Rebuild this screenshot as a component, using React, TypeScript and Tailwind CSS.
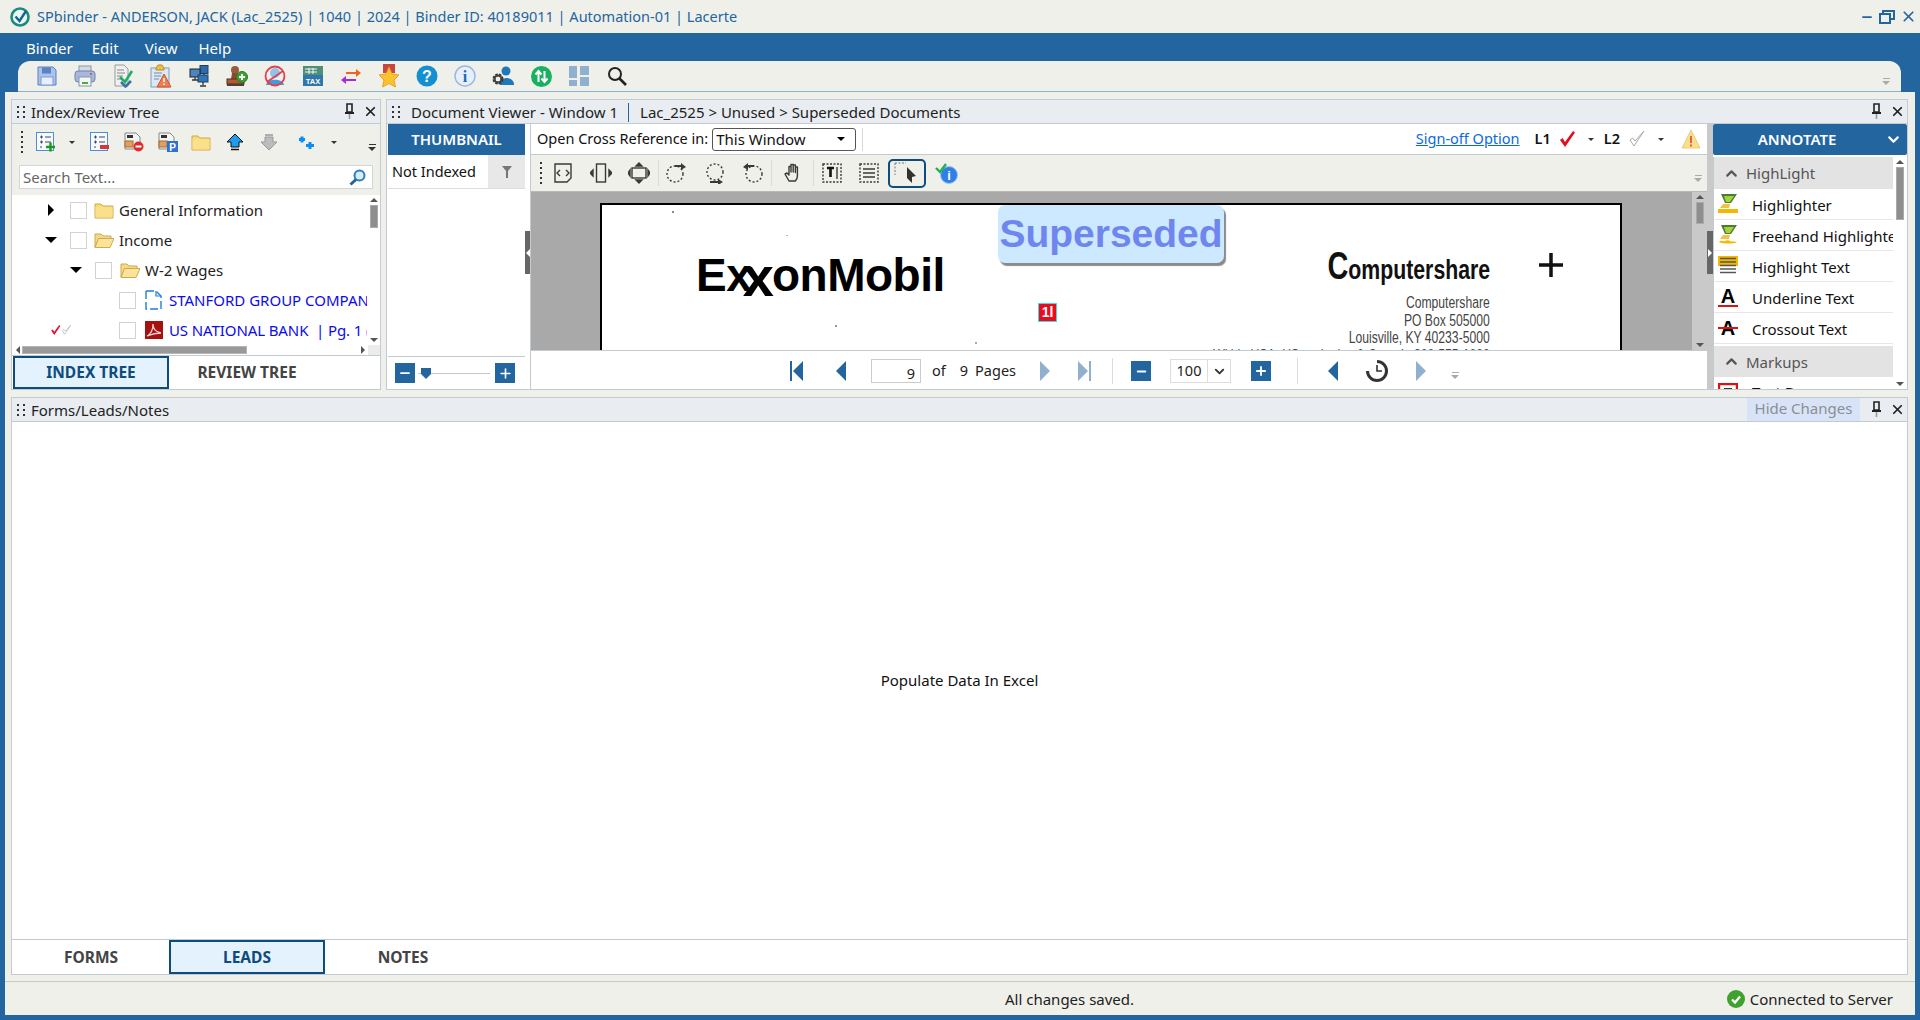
import { ReactNode } from "react";
import { ChevronDown, ChevronUp, Minus, Plus, X } from "lucide-react";

const BLUE = "#23659f";

function Caret({ dir = "down", size = 4, color = "#000" }: { dir?: "down" | "right" | "left" | "up"; size?: number; color?: string }) {
  const s = size * 2;
  const pts = { down: `0,0 ${s},0 ${size},${size}`, up: `0,${size} ${s},${size} ${size},0`, right: `0,0 ${size},${size} 0,${s}`, left: `${size},0 0,${size} ${size},${s}` }[dir];
  const w = dir === "down" || dir === "up" ? s : size;
  const h = dir === "down" || dir === "up" ? size : s;
  return (
    <svg width={w} height={h} viewBox={`0 0 ${w} ${h}`} className="shrink-0">
      <polygon points={pts} fill={color} />
    </svg>
  );
}

function Grip({ rows = 2 }: { rows?: number }) {
  return (
    <div className="grid grid-cols-2 gap-[3px] w-[9px] shrink-0">
      {Array.from({ length: rows * 2 }).map((_, i) => (
        <span key={i} className="w-[2px] h-[2px] bg-[#333]" />
      ))}
    </div>
  );
}

function VDots() {
  return (
    <div className="flex flex-col gap-[3px] shrink-0">
      {[0, 1, 2, 3, 4].map((i) => (
        <span key={i} className="w-[2px] h-[2px] bg-[#333]" />
      ))}
    </div>
  );
}

function Overflow({ color = "#333" }: { color?: string }) {
  return (
    <div className="flex flex-col items-center gap-[2px] shrink-0">
      <span className="w-[7px] h-px" style={{ background: color }} />
      <Caret size={4} color={color} />
    </div>
  );
}

function PinIcon() {
  return (
    <svg width="11" height="17" viewBox="0 0 11 17" className="shrink-0">
      <path d="M3 1h5v8H3z" fill="#e9edf2" stroke="#222" strokeWidth="1.6" />
      <path d="M1 10h9" stroke="#222" strokeWidth="2" />
      <path d="M5.5 11v5" stroke="#999" strokeWidth="1.6" />
    </svg>
  );
}

function PanelHeader({ title, children }: { title: ReactNode; children?: ReactNode }) {
  return (
    <div className="h-[24px] shrink-0 flex items-center bg-[#e9edf2] border-b border-[#c2cbd2] pl-[5px] text-[15px] text-[#222]">
      <Grip rows={3} />
      <div className="flex items-center pt-[1px]">{title}</div>
      <div className="ml-auto flex items-center h-full">
        {children}
        <div className="ml-[11px]"><PinIcon /></div>
        <X size={15} color="#222" strokeWidth={2.8} className="ml-[8px] mr-[2px]" />
      </div>
    </div>
  );
}

function TabButton({ label, active, w }: { label: string; active?: boolean; w: string }) {
  return (
    <div
      className={`${w} h-full flex items-center justify-center pt-[1px] text-[15.5px] font-bold ${
        active ? "bg-[#e3f2fd] border-2 border-[#0d4c7d] text-[#0d4c7d]" : "text-[#444]"
      }`}
    >
      {label}
    </div>
  );
}

/* ---------- main toolbar icons ---------- */
const ico = "shrink-0";

function TB({ children }: { children: ReactNode }) {
  return <div className="w-[22px] h-[24px] shrink-0 flex items-center justify-center">{children}</div>;
}
function SaveIcon() {
  return (
    <svg width="22" height="22" viewBox="0 0 22 22" className={ico}>
      <path d="M2 2h15l3 3v15H2z" fill="#a9c3ea" stroke="#5b7fc0" />
      <rect x="6" y="2.5" width="9" height="6" fill="#5d82c4" />
      <rect x="5" y="12" width="12" height="8" fill="#e8eefb" stroke="#7d9bd0" />
    </svg>
  );
}
function PrintIcon() {
  return (
    <svg width="22" height="22" viewBox="0 0 22 22" className={ico}>
      <rect x="5" y="1" width="12" height="6" fill="#d6dae2" stroke="#8d96a8" />
      <rect x="1" y="6" width="20" height="11" rx="3" fill="#a8b8dc" stroke="#6d81b5" />
      <rect x="5" y="12" width="12" height="9" fill="#f4f6f4" stroke="#8d96a8" />
      <rect x="8" y="17" width="6" height="2" fill="#4fa64f" />
      <circle cx="17" cy="9" r="1" fill="#d94040" />
    </svg>
  );
}
function DocCheckIcon() {
  return (
    <svg width="22" height="24" viewBox="0 0 22 24" className={ico}>
      <path d="M3 1h9l4 4v17H3z" fill="#f0f0f0" stroke="#9a9a9a" />
      <path d="M5 6h7M5 9h8M5 12h6M5 15h5" stroke="#888" />
      <path d="M9 18l5 5M19 17l-6 6" stroke="#3d6fa5" strokeWidth="2.5" />
      <path d="M8 13l5 5 7-11" fill="none" stroke="#1fae6a" strokeWidth="2.6" />
    </svg>
  );
}
function ClipWarnIcon() {
  return (
    <svg width="22" height="24" viewBox="0 0 22 24" className={ico}>
      <rect x="1" y="4" width="18" height="19" fill="#dce8f4" stroke="#7d9bc0" />
      <path d="M6 4l2-3h4l2 3v2H6z" fill="#ecc04f" stroke="#b98e25" />
      <path d="M4 9h8M4 12h7M4 15h5" stroke="#7a8ca0" />
      <path d="M14 10l7 13H7z" fill="#ef7d4f" stroke="#cc5530" />
      <path d="M14 14v4M14 19.5v1.5" stroke="#fff" strokeWidth="1.5" />
    </svg>
  );
}
function NetworkIcon() {
  return (
    <svg width="20" height="22" viewBox="0 0 20 22" className={ico}>
      <rect x="11" y="0.5" width="8" height="8" fill="#2f6aa8" stroke="#1c3f66" />
      <rect x="1" y="4" width="10" height="8" fill="#4a86c0" stroke="#222" />
      <rect x="9" y="10" width="10" height="7" fill="#2e76b8" stroke="#1c3f66" />
      <path d="M15 9v1M6 12v3M3 15h6M14 17v3M11 21h6" stroke="#333" strokeWidth="1.3" />
    </svg>
  );
}
function StampIcon() {
  return (
    <svg width="22" height="22" viewBox="0 0 22 22" className={ico}>
      <circle cx="9" cy="5" r="4" fill="#9a5a42" />
      <path d="M6 8h6l1 6H5z" fill="#8a4a32" />
      <rect x="1" y="14" width="17" height="5" fill="#b25a30" stroke="#5b2f18" />
      <rect x="1" y="19" width="17" height="2" fill="#444" />
      <circle cx="16" cy="12" r="5.5" fill="#3e9e34" stroke="#2a7b25" />
      <path d="M13 12h6M16 9v6" stroke="#fff" strokeWidth="1.8" />
    </svg>
  );
}
function NoUserIcon() {
  return (
    <svg width="22" height="22" viewBox="0 0 22 22" className={ico}>
      <circle cx="11" cy="8" r="5" fill="#8fc3ea" />
      <path d="M2 20c1-7 17-7 18 0z" fill="#3e9be0" />
      <circle cx="11" cy="11" r="9.5" fill="none" stroke="#e3404a" strokeWidth="1.8" />
      <path d="M3 17L19 6" stroke="#e3404a" strokeWidth="1.8" />
    </svg>
  );
}
function TaxIcon() {
  return (
    <svg width="22" height="22" viewBox="0 0 22 22" className={ico}>
      <rect x="1" y="1" width="20" height="20" fill="#2f78ad" />
      <rect x="1" y="1" width="20" height="9" fill="#4d9078" />
      <path d="M3 4h12M3 7h12M7 3v6M11 3v6" stroke="#fff" strokeWidth="0.9" />
      <text x="11" y="19" textAnchor="middle" fontSize="7.5" fontWeight="700" fill="#fff" fontFamily="Liberation Sans, sans-serif">TAX</text>
    </svg>
  );
}
function SwapIcon() {
  return (
    <svg width="22" height="20" viewBox="0 0 22 20" className={ico}>
      <path d="M6 8V6h10V3l5 4-5 4V8z" fill="#f0641e" />
      <path d="M16 11v2H6v3l-5-4 5-4v3z" fill="#a72ae0" transform="translate(0 2)" />
    </svg>
  );
}
function MedalIcon() {
  return (
    <svg width="22" height="24" viewBox="0 0 22 24" className={ico}>
      <path d="M5 0h12v9H5z" fill="#c9453f" />
      <polygon points="11,3 14,10 21,11 16,16 17.5,23 11,19.5 4.5,23 6,16 1,11 8,10" fill="#f9c22e" stroke="#f0a020" />
    </svg>
  );
}
function HelpIcon() {
  return (
    <svg width="22" height="22" viewBox="0 0 22 22" className={ico}>
      <circle cx="11" cy="11" r="10.5" fill="#138fd2" />
      <text x="11" y="16.5" textAnchor="middle" fontSize="16" fontWeight="700" fill="#fff" fontFamily="Liberation Sans, sans-serif">?</text>
    </svg>
  );
}
function InfoIcon() {
  return (
    <svg width="22" height="22" viewBox="0 0 22 22" className={ico}>
      <circle cx="11" cy="11" r="10" fill="#e6f0fb" stroke="#9db8de" strokeWidth="1.5" />
      <text x="11" y="17" textAnchor="middle" fontSize="16" fontWeight="700" fill="#2467b5" fontFamily="Liberation Serif, serif">i</text>
    </svg>
  );
}
function UserGearIcon() {
  return (
    <svg width="22" height="22" viewBox="0 0 22 22" className={ico}>
      <circle cx="14" cy="6" r="4.5" fill="#1f78b8" />
      <path d="M8 20c0-9 13-9 14-1v1z" fill="#1f78b8" />
      <circle cx="6" cy="14" r="4" fill="none" stroke="#333" strokeWidth="3" strokeDasharray="2.2 1" />
      <circle cx="6" cy="14" r="3.5" fill="none" stroke="#444" strokeWidth="2" />
    </svg>
  );
}
function UpDownIcon() {
  return (
    <svg width="21" height="21" viewBox="0 0 21 21" className={ico}>
      <circle cx="10.5" cy="10.5" r="10.5" fill="#19b060" />
      <path d="M7.5 16V6M4.5 8.5l3-3.5 3 3.5M13.5 5v10M10.5 12.5l3 3.5 3-3.5" fill="none" stroke="#fff" strokeWidth="2" />
    </svg>
  );
}
function GridIcon() {
  return (
    <svg width="20" height="20" viewBox="0 0 20 20" className={ico}>
      <path d="M0 0h8v12H0zM0 14h8v6H0zM11 0h9v9h-9zM11 11h9v9h-9z" fill="#8fb1cf" />
    </svg>
  );
}
function SearchIcon() {
  return (
    <svg width="20" height="20" viewBox="0 0 20 20" className={ico}>
      <circle cx="8" cy="8" r="6" fill="none" stroke="#222" strokeWidth="2" />
      <path d="M12.5 12.5L19 19" stroke="#222" strokeWidth="2.6" />
    </svg>
  );
}

/* ---------- tree icons ---------- */
function ListPlusIcon({ minus }: { minus?: boolean }) {
  return (
    <svg width="20" height="20" viewBox="0 0 20 20" className={ico}>
      <rect x="0.5" y="0.5" width="17" height="18" fill="#f6f9fd" stroke="#4a90d9" />
      <path d="M4 5h3M5.5 3.5v3M4 10h3M5.5 8.5v3M4 15h2M9 5h6M9 10h6" stroke="#445" />
      {minus ? (
        <rect x="10" y="13" width="9" height="4" fill="#d33" />
      ) : (
        <path d="M10 15h9M14.5 10.5v9" stroke="#1a9a1a" strokeWidth="2.4" />
      )}
    </svg>
  );
}
function PageBadgeIcon({ kind }: { kind: "del" | "p" }) {
  return (
    <svg width="20" height="20" viewBox="0 0 20 20" className={ico}>
      <path d="M1 1h11l4 4v12H1z" fill="#f4f4f4" stroke="#888" />
      <path d="M3 3h6v3H3z" fill="#333" />
      <rect x="1" y="9" width="8" height="6" fill="#e0a060" stroke="#a86a30" />
      {kind === "del" ? (
        <>
          <circle cx="14.5" cy="14.5" r="5" fill="#dd2c2c" />
          <path d="M11.5 14.5h6" stroke="#fff" strokeWidth="2" />
        </>
      ) : (
        <>
          <rect x="9" y="9" width="11" height="11" fill="#2f6fd0" />
          <text x="14.5" y="18.5" textAnchor="middle" fontSize="10" fontWeight="700" fill="#fff" fontFamily="Liberation Sans, sans-serif">P</text>
        </>
      )}
    </svg>
  );
}
function ClosedFolder({ w = 20 }: { w?: number }) {
  return (
    <svg width={w} height="18" viewBox="0 0 20 18" className={ico}>
      <path d="M1 3h6l2 2h10v12H1z" fill="#f8d878" stroke="#cfa94c" />
      <rect x="1.5" y="6" width="17" height="10.5" fill="#fbe08c" />
    </svg>
  );
}
function OpenFolder() {
  return (
    <svg width="20" height="18" viewBox="0 0 20 18" className={ico}>
      <path d="M1 3h6l2 2h8v3H5L1 16z" fill="#f5d888" stroke="#cfa94c" />
      <path d="M4.5 7.5H20L16 16.5H1z" fill="#fbe49a" stroke="#cfa94c" />
    </svg>
  );
}
function UpArrow({ color, stem }: { color: string; stem: string }) {
  return (
    <svg width="18" height="18" viewBox="0 0 18 18" className={ico}>
      <path d="M9 1L1 9h4v5h8V9h4z" fill={color} stroke={stem} />
      <path d="M5 16.5h8" stroke={stem} strokeWidth="1.5" />
    </svg>
  );
}
function DownArrow() {
  return (
    <svg width="18" height="18" viewBox="0 0 18 18" className={ico}>
      <path d="M5 2h8" stroke="#999" strokeWidth="1.5" />
      <path d="M9 17l8-8h-4V4H5v5H1z" fill="#bcbcbc" stroke="#999" />
    </svg>
  );
}
function BlueDiamonds() {
  return (
    <svg width="17" height="13" viewBox="0 0 17 13" className={ico}>
      <path d="M1 3.5h6M4 .5v6M8 9.5h8M12 6v7" stroke="#0d8df0" strokeWidth="3" />
    </svg>
  );
}
function Checkbox() {
  return <span className="block w-[17px] h-[17px] shrink-0 bg-white border border-[#cdd3d8]" />;
}
function PdfIcon() {
  return (
    <svg width="18" height="18" viewBox="0 0 18 18" className={ico}>
      <rect width="18" height="18" fill="#a81010" />
      <path d="M2 15c4-2 6-6 6-12 0 5 3 8 8 9-5 0-9 1-14 3z" fill="none" stroke="#f0d0d0" strokeWidth="1.3" />
    </svg>
  );
}
function BlankDoc() {
  return (
    <svg width="17" height="20" viewBox="0 0 17 20" className={ico}>
      <path d="M1 1h10l5 5v13H1z" fill="#fff" stroke="#1f7fd8" strokeWidth="1.4" strokeDasharray="8 3" />
      <path d="M11 1v5h5" fill="none" stroke="#1f7fd8" strokeWidth="1.2" />
    </svg>
  );
}
function SignCheck({ color, w = 18, outline }: { color: string; w?: number; outline?: boolean }) {
  return (
    <svg width={w} height="18" viewBox="0 0 18 18" className={ico}>
      {outline ? (
        <path d="M2 10l4 6L16 1 7 11 4.5 8z" fill="#fff" stroke={color} />
      ) : (
        <path d="M2 10l2.5-2 2.5 4L15 1l2 1.5L7 17z" fill={color} />
      )}
    </svg>
  );
}

/* ---------- viewer toolbar icons ---------- */
const tool = "#3a3a32";
function ToolSvg({ children }: { children: ReactNode }) {
  return (
    <svg width="22" height="22" viewBox="0 0 22 22" className={ico} fill="none" stroke={tool} strokeWidth="1.4">
      {children}
    </svg>
  );
}
function Sep() {
  return <span className="block w-px h-[26px] bg-[#dcdcd6] shrink-0" />;
}

const annotateRows: { label: string; icon: ReactNode }[] = [
  {
    label: "Highlighter",
    icon: (
      <svg width="20" height="20" viewBox="0 0 20 20" className={ico}>
        <path d="M3 0h16l-6 9H7z" fill="#4d7a3a" />
        <path d="M6 2h10l-4 6H8z" fill="#a5d334" />
        <path d="M5 10h7l-1 4H2z" fill="#f4c242" />
        <rect y="15" width="20" height="4" fill="#f5b800" />
      </svg>
    ),
  },
  {
    label: "Freehand Highlighter",
    icon: (
      <svg width="20" height="20" viewBox="0 0 20 20" className={ico}>
        <path d="M3 0h16l-6 9H7z" fill="#4d7a3a" />
        <path d="M6 2h10l-4 6H8z" fill="#a5d334" />
        <path d="M5 10h7l-1 4H2z" fill="#f4c242" />
        <path d="M1 17c2-3 4 0 6-1s4-1 5 0 4 0 7 1c-3 2-14 2-18 0z" fill="#f5b800" />
      </svg>
    ),
  },
  {
    label: "Highlight Text",
    icon: (
      <svg width="20" height="20" viewBox="0 0 20 20" className={ico}>
        <rect width="20" height="10" fill="#f5b800" />
        <path d="M2 2.5h16M2 6h16M2 9.5h16M2 13h16M2 16.5h16" stroke="#555" strokeWidth="1.4" />
      </svg>
    ),
  },
  {
    label: "Underline Text",
    icon: (
      <div className="w-[20px] flex flex-col items-center shrink-0">
        <span className="text-[20px] leading-[17px] font-bold font-['Liberation_Sans',sans-serif] text-black">A</span>
        <span className="w-[20px] h-[2px] bg-[#e01010]" />
      </div>
    ),
  },
  {
    label: "Crossout Text",
    icon: (
      <div className="w-[20px] h-[17px] relative flex justify-center shrink-0">
        <span className="text-[20px] leading-[17px] font-bold font-['Liberation_Sans',sans-serif] text-black">A</span>
        <span className="absolute left-0 top-[7px] w-[20px] h-[2px] bg-[#e01010]" />
      </div>
    ),
  },
];

function ScrollY({ h, thumbTop, thumbH, w = 12, bg = "bg-white" }: { h: string; thumbTop: string; thumbH: string; w?: number; bg?: string }) {
  return (
    <div className={`${h} ${bg} shrink-0 flex flex-col items-center justify-between py-[3px]`} style={{ width: w }}>
      <Caret dir="up" size={4} color="#555" />
      <div className={`flex-1 w-full ${thumbTop}`}>
        <div className={`${thumbH} mx-auto w-[8px] bg-[#8e8e8e] border border-[#aaa]`} />
      </div>
      <Caret size={4} color="#555" />
    </div>
  );
}

export default function App() {
  return (
    <div className="w-[1920px] h-[1020px] overflow-hidden flex flex-col bg-[#23659f] font-['Noto_Sans',sans-serif]">
      {/* title bar */}
      <div className="h-[33px] shrink-0 bg-[#f0f0eb] flex items-center pl-[10px] pr-[3px]">
        <svg width="20" height="20" viewBox="0 0 20 20" className="shrink-0">
          <circle cx="10" cy="10" r="8.5" fill="#e9f7f2" stroke="#1d8a7c" strokeWidth="2.6" />
          <path d="M5.5 9.5l4 4.5L16 4" fill="none" stroke="#1a5f9a" strokeWidth="2.4" />
        </svg>
        <span className="ml-[7px] pt-[1px] text-[14.5px] text-[#23659f] whitespace-nowrap">
          SPbinder - ANDERSON, JACK (Lac_2525) | 1040 | 2024 | Binder ID: 40189011 | Automation-01 | Lacerte
        </span>
        <div className="ml-auto flex items-center gap-[5px]">
          <Minus size={14} color={BLUE} strokeWidth={3} />
          <svg width="16" height="14" viewBox="0 0 16 14">
            <path d="M4 3V1h11v8h-3M1 4h10v9H1z" fill="none" stroke={BLUE} strokeWidth="2" />
          </svg>
          <X size={17} color={BLUE} strokeWidth={2.4} />
        </div>
      </div>

      {/* menu bar */}
      <div className="h-[28px] shrink-0 flex items-center pt-[2px] pl-[26px] text-white text-[15px]">
        <span>Binder</span>
        <span className="ml-[19px]">Edit</span>
        <span className="ml-[26px]">View</span>
        <span className="ml-[21px]">Help</span>
      </div>

      {/* main toolbar */}
      <div className="ml-[18px] w-[1883px] h-[31px] shrink-0 bg-[#f0f0eb] rounded-t-[12px] border-b border-[#8ab0d4] flex items-center pl-[18px] pr-[11px] gap-[16px]">
        <TB><SaveIcon /></TB>
        <TB><PrintIcon /></TB>
        <TB><DocCheckIcon /></TB>
        <TB><ClipWarnIcon /></TB>
        <TB><NetworkIcon /></TB>
        <TB><StampIcon /></TB>
        <TB><NoUserIcon /></TB>
        <TB><TaxIcon /></TB>
        <TB><SwapIcon /></TB>
        <TB><MedalIcon /></TB>
        <TB><HelpIcon /></TB>
        <TB><InfoIcon /></TB>
        <TB><UserGearIcon /></TB>
        <TB><UpDownIcon /></TB>
        <TB><GridIcon /></TB>
        <TB><SearchIcon /></TB>
        <div className="ml-auto pt-[10px]">
          <Overflow color="#aaa" />
        </div>
      </div>

      {/* content */}
      <div className="ml-[5px] w-[1910px] flex-1 min-h-0 bg-[#f0f0eb] flex flex-col pl-[6px] pr-[7px] pt-[7px]">
        <div className="h-[291px] shrink-0 flex gap-[5px]">
          {/* index / review tree */}
          <div className="w-[370px] shrink-0 border border-[#c2cbd2] flex flex-col bg-white">
            <PanelHeader title={<span className="ml-[5px]">Index/Review Tree</span>} />
            <div className="h-[36px] shrink-0 bg-[#f0f0eb] flex items-center pl-[9px]">
              <VDots />
              <div className="ml-[13px]"><ListPlusIcon /></div>
              <div className="ml-[13px]"><Caret size={3} color="#333" /></div>
              <div className="ml-[15px]"><ListPlusIcon minus /></div>
              <div className="ml-[14px]"><PageBadgeIcon kind="del" /></div>
              <div className="ml-[14px]"><PageBadgeIcon kind="p" /></div>
              <div className="ml-[13px]"><ClosedFolder /></div>
              <div className="ml-[15px]"><UpArrow color="#1d9cf0" stem="#111" /></div>
              <div className="ml-[16px]"><DownArrow /></div>
              <div className="ml-[20px]"><BlueDiamonds /></div>
              <div className="ml-[16px]"><Caret size={3} color="#333" /></div>
              <div className="ml-[31px] pt-[10px]"><Overflow /></div>
            </div>
            <div className="h-[35px] shrink-0 bg-[#f0f0eb] px-[7px] pt-[5px]">
              <div className="h-[24px] bg-white border border-[#d0d6da] flex items-center px-[3px] text-[15px] text-[#666]">
                Search Text...
                <svg width="17" height="17" viewBox="0 0 17 17" className="ml-auto mr-[3px]">
                  <circle cx="10.5" cy="6.5" r="5" fill="#d5ecfb" stroke="#2c7dc0" strokeWidth="2" />
                  <path d="M7 10.5L1.5 15.5" stroke="#2a5f90" strokeWidth="3" />
                </svg>
              </div>
            </div>
            <div className="h-[150px] shrink-0 flex overflow-hidden">
              <div className="w-[355px] shrink-0 flex flex-col overflow-hidden text-[15px]">
                <div className="h-[30px] shrink-0 flex items-center whitespace-nowrap pl-[34px]">
                  <div className="w-[10px] flex justify-center"><Caret dir="right" size={6} /></div>
                  <div className="ml-[14px]"><Checkbox /></div>
                  <div className="ml-[7px]"><ClosedFolder /></div>
                  <span className="ml-[5px] text-[#222]">General Information</span>
                </div>
                <div className="h-[30px] shrink-0 flex items-center whitespace-nowrap pl-[33px]">
                  <Caret size={6} />
                  <div className="ml-[13px]"><Checkbox /></div>
                  <div className="ml-[7px]"><OpenFolder /></div>
                  <span className="ml-[5px] text-[#222]">Income</span>
                </div>
                <div className="h-[30px] shrink-0 flex items-center whitespace-nowrap pl-[58px]">
                  <Caret size={6} />
                  <div className="ml-[13px]"><Checkbox /></div>
                  <div className="ml-[8px]"><OpenFolder /></div>
                  <span className="ml-[5px] text-[#222]">W-2 Wages</span>
                </div>
                <div className="h-[30px] shrink-0 flex items-center whitespace-nowrap pl-[107px] overflow-hidden">
                  <Checkbox />
                  <div className="ml-[9px]"><BlankDoc /></div>
                  <span className="ml-[7px] text-[#0b0bee]">STANFORD GROUP COMPANY</span>
                </div>
                <div className="h-[30px] shrink-0 flex items-center whitespace-nowrap pl-[38px] overflow-hidden">
                  <SignCheck color="#e8112d" w={11} />
                  <SignCheck color="#a8a8a8" w={11} outline />
                  <div className="ml-[47px]"><Checkbox /></div>
                  <div className="ml-[9px]"><PdfIcon /></div>
                  <span className="ml-[6px] text-[#0b0bee] tracking-[-0.1px]">US NATIONAL BANK &nbsp;| Pg. 1 (W-2)</span>
                </div>
              </div>
              <ScrollY h="h-[150px]" thumbTop="pt-[3px]" thumbH="h-[23px]" w={13} />
            </div>
            <div className="h-[10px] shrink-0 flex items-center pl-[4px]">
              <Caret dir="left" size={4} color="#555" />
              <div className="ml-[2px] w-[225px] h-[8px] bg-[#999] border border-[#b5b5b5]" />
              <div className="ml-auto"><Caret dir="right" size={4} color="#555" /></div>
              <div className="ml-[3px] w-[12px] h-full bg-[#ececec]" />
            </div>
            <div className="h-[34px] shrink-0 flex border-t border-[#c2cbd2] pl-[1px]">
              <TabButton label="INDEX TREE" active w="w-[156px]" />
              <TabButton label="REVIEW TREE" w="w-[156px]" />
            </div>
          </div>

          {/* document viewer */}
          <div className="flex-1 min-w-0 border border-[#c2cbd2] flex flex-col bg-white">
            <PanelHeader
              title={
                <>
                  <span className="ml-[10px]">Document Viewer - Window 1</span>
                  <span className="w-px h-[19px] bg-[#23659f] mx-[10px]" />
                  <span className="ml-[1px]">Lac_2525 &gt; Unused &gt; Superseded Documents</span>
                </>
              }
            />
            <div className="flex-1 min-h-0 flex">
              {/* thumbnail column */}
              <div className="w-[138px] shrink-0 pl-[1px] flex flex-col">
                <div className="h-[31px] shrink-0 bg-[#23659f] text-white text-[15px] font-semibold flex items-center justify-center">THUMBNAIL</div>
                <div className="h-[34px] shrink-0 flex border-b border-[#dcdfe2] text-[14.5px] text-[#111]">
                  <div className="w-[100px] pl-[4px] pt-[1px] flex items-center whitespace-nowrap">Not Indexed</div>
                  <div className="flex-1 bg-[#e8e8e8] flex items-center justify-center">
                    <svg width="10" height="12" viewBox="0 0 10 12"><path d="M0 0h10L6 5v7H4V5z" fill="#777" /></svg>
                  </div>
                </div>
                <div className="flex-1" />
                <div className="h-[33px] shrink-0 border-t border-[#c2cbd2] flex items-center pl-[7px]">
                  <div className="w-[20px] h-[20px] bg-[#23659f] flex items-center justify-center"><Minus size={14} color="#fff" strokeWidth={3} /></div>
                  <div className="relative w-[72px] h-[1px] bg-[#c6c6c6] ml-[3px]">
                    <svg width="10" height="11" viewBox="0 0 10 11" className="absolute left-[3px] -top-[5px]"><path d="M0 0h10v6l-5 5-5-5z" fill="#23659f" /></svg>
                  </div>
                  <div className="ml-[5px] w-[20px] h-[20px] bg-[#23659f] flex items-center justify-center"><Plus size={15} color="#fff" strokeWidth={2.6} /></div>
                </div>
              </div>

              {/* left collapse strip */}
              <div className="w-[6px] shrink-0 flex items-center border-r border-[#c2cbd2]">
                <div className="w-[6px] h-[43px] bg-[#666] flex items-center justify-center -mt-[8px]"><Caret dir="left" size={4} color="#fff" /></div>
              </div>

              {/* viewer */}
              <div className="flex-1 min-w-0 flex flex-col">
                <div className="h-[31px] shrink-0 border-b border-[#c2cbd2] flex items-center text-[14.5px] text-[#111] pl-[6px] pr-[6px]">
                  <span className="whitespace-nowrap">Open Cross Reference in:</span>
                  <div className="ml-[4px] w-[144px] h-[23px] border border-[#555] rounded-[3px] flex items-center pl-[3px] pr-[10px] text-[15px]">
                    This Window
                    <div className="ml-auto"><Caret size={4} /></div>
                  </div>
                  <span className="ml-[6px] w-px h-[23px] bg-[#d8d8d8]" />
                  <span className="ml-auto text-[#0a6ae0] underline whitespace-nowrap">Sign-off Option</span>
                  <span className="ml-[15px] font-semibold">L1</span>
                  <div className="ml-[7px]"><SignCheck color="#e01020" /></div>
                  <div className="ml-[12px]"><Caret size={3} color="#333" /></div>
                  <span className="ml-[10px] font-semibold">L2</span>
                  <div className="ml-[8px]"><SignCheck color="#aaa" outline /></div>
                  <div className="ml-[12px]"><Caret size={3} color="#333" /></div>
                  <svg width="20" height="20" viewBox="0 0 20 20" className="ml-[17px] shrink-0">
                    <path d="M10 1l9 18H1z" fill="#f8e08a" stroke="#e8cf7a" />
                    <path d="M10 7v7M10 15.5v2" stroke="#e8604c" strokeWidth="2" />
                  </svg>
                </div>

                <div className="h-[37px] shrink-0 bg-[#f0f0eb] flex items-center pl-[9px] border-b border-[#b8b8b8]">
                  <VDots />
                  <div className="ml-[10px]"><ToolSvg><path d="M3 2h16v14l-4 4H3zM8 8l-3 3 3 3M14 8l3 3-3 3" /></ToolSvg></div>
                  <div className="ml-[16px]"><ToolSvg><rect x="6.5" y="2" width="9" height="18" /><path d="M3 8v6L0 11zM19 8v6l3-3z" fill={tool} /></ToolSvg></div>
                  <div className="ml-[16px]"><ToolSvg><rect x="4" y="6" width="14" height="10" /><path d="M8 4h6l-3-3zM8 18h6l-3 3zM2 8v6l-2-3zM20 8v6l2-3z" fill={tool} /></ToolSvg></div>
                  <div className="ml-[8px]"><Sep /></div>
                  <div className="ml-[6px]"><ToolSvg><circle cx="10" cy="12" r="8" strokeDasharray="2 2" /><path d="M10 3h6v-2l5 4-5 3V5h-6z" fill={tool} stroke="none" /></ToolSvg></div>
                  <div className="ml-[17px]"><ToolSvg><circle cx="11" cy="10" r="8" strokeDasharray="2 2" /><path d="M6 19h8v-2l5 3-5 3v-2H6z" fill={tool} stroke="none" /></ToolSvg></div>
                  <div className="ml-[16px]"><ToolSvg><circle cx="12" cy="12" r="8" strokeDasharray="2 2" /><path d="M12 3H6V1L1 5l5 3V5h6z" fill={tool} stroke="none" /></ToolSvg></div>
                  <div className="ml-[7px]"><Sep /></div>
                  <div className="ml-[11px]"><ToolSvg><path d="M6 19l-4-7 2-1 2 2V4.5h2V10V2.5h2.2V10V3h2.2v7.5V5h2v9c0 3-1 4-2 5z" strokeLinejoin="round" /></ToolSvg></div>
                  <div className="ml-[8px]"><Sep /></div>
                  <div className="ml-[7px]"><ToolSvg><rect x="2" y="2" width="18" height="18" strokeDasharray="2 1.5" /><path d="M6 6h7M9.5 6v9" strokeWidth="2.6" stroke="#111" /><path d="M16 5v12" /></ToolSvg></div>
                  <div className="ml-[15px]"><ToolSvg><rect x="2" y="2" width="18" height="18" strokeDasharray="2 1.5" /><path d="M5 7h12M5 11h12M5 15h12" /></ToolSvg></div>
                  <div className="ml-[8px] w-[38px] h-[29px] border-2 border-[#0d4c7d] rounded-[5px] flex items-center justify-center">
                    <svg width="26" height="22" viewBox="0 0 26 22">
                      <path d="M1 1h11M1 1v12" stroke="#777" strokeDasharray="2 1.5" fill="none" />
                      <path d="M13 5l9 9-4 1v6l-5-5z" fill="#33322a" />
                    </svg>
                  </div>
                  <div className="ml-[9px] shrink-0">
                    <svg width="24" height="22" viewBox="0 0 24 22">
                      <circle cx="14" cy="13" r="8.5" fill="#2f7fe8" stroke="#9cc4f0" />
                      <text x="14" y="18" textAnchor="middle" fontSize="13" fontWeight="700" fill="#fff" fontFamily="Liberation Sans, sans-serif">i</text>
                      <path d="M1 6l4 4 6-8" fill="none" stroke="#1fb24a" strokeWidth="2.4" />
                    </svg>
                  </div>
                  <div className="ml-auto mr-[5px] pt-[10px]"><Overflow color="#aaa" /></div>
                </div>

                {/* document canvas */}
                <div className="h-[158px] shrink-0 flex">
                  <div className="flex-1 min-w-0 bg-[#a9a9a9] relative overflow-hidden font-['Liberation_Sans',sans-serif]">
                    <div className="absolute left-[69px] top-[11px] w-[1022px] h-[300px] bg-white border-2 border-black">
                      <span className="absolute left-[70px] top-[6px] w-[2px] h-[2px] bg-[#888]" />
                      <span className="absolute left-[184px] top-[30px] w-[2px] h-[1px] bg-[#bbb]" />
                      <span className="absolute left-[233px] top-[120px] w-[2px] h-[2px] bg-[#999]" />
                      <span className="absolute left-[373px] top-[137px] w-[2px] h-[2px] bg-[#aaa]" />
                      <div className="absolute left-[94px] top-[42px] text-[46px] leading-[56px] font-bold text-black whitespace-nowrap tracking-[-0.5px]">
                        E<span className="tracking-[-9px]">x</span><span className="text-[56px] leading-[40px] relative top-[5px] tracking-[-2px]">x</span>onMobil
                      </div>
                      <div className="absolute right-[130px] top-[46px] font-bold text-[28px] leading-[34px] text-[#111] whitespace-nowrap scale-x-[0.76] origin-right">
                        <span className="text-[38px] leading-[30px]">C</span>omputershare
                      </div>
                      <div className="absolute right-[130px] top-[89px] text-right text-[16px] leading-[17.5px] text-[#444] whitespace-nowrap scale-x-[0.76] origin-right">
                        <div>Computershare</div>
                        <div>PO Box 505000</div>
                        <div>Louisville, KY 40233-5000</div>
                        <div>Within USA, US territories &amp; Canada 800-555-1000</div>
                      </div>
                      <svg width="26" height="26" viewBox="0 0 26 26" className="absolute left-[936px] top-[47px]">
                        <path d="M13 1v24M1 13h24" stroke="#111" strokeWidth="3.5" />
                      </svg>
                      <div className="absolute left-[436px] top-[98px] w-[19px] h-[19px] bg-[#ee0a1e] border border-[#38e0e0] text-white text-[14px] leading-[17px] font-bold text-center">1l</div>
                      <div className="absolute left-[396px] top-0 w-[226px] h-[58px] bg-[#cde9ff] rounded-[7px] shadow-[2px_3px_1px_#8a8a8a] flex items-center justify-center text-[#6f86ee] text-[39px] leading-[58px] font-bold">
                        Superseded
                      </div>
                    </div>
                  </div>
                  <ScrollY h="h-[158px]" thumbTop="pt-[3px]" thumbH="h-[22px]" w={15} bg="bg-[#c9c9c9]" />
                </div>

                {/* page navigation */}
                <div className="flex-1 min-h-0 border-t border-[#c2cbd2] flex items-center pt-[2px] text-[14.5px] text-[#222] pl-[259px]">
                  <svg width="13" height="20" viewBox="0 0 13 20" className="shrink-0"><path d="M0 0h2v20H0zM13 0v20L3 10z" fill="#23659f" /></svg>
                  <div className="ml-[33px]"><Caret dir="left" size={10} color="#23659f" /></div>
                  <div className="ml-[25px] w-[50px] h-[24px] border border-[#ccc] text-right pr-[5px] leading-[26px]">9</div>
                  <span className="ml-[11px]">of</span>
                  <span className="ml-[14px]">9</span>
                  <span className="ml-[7px]">Pages</span>
                  <div className="ml-[24px]"><Caret dir="right" size={10} color="#8fb1cf" /></div>
                  <svg width="13" height="20" viewBox="0 0 13 20" className="ml-[28px] shrink-0"><path d="M11 0h2v20h-2zM0 0v20L10 10z" fill="#8fb1cf" /></svg>
                  <span className="ml-[21px] w-px h-[26px] bg-[#dcdcdc]" />
                  <div className="ml-[18px] w-[20px] h-[20px] bg-[#23659f] flex items-center justify-center"><Minus size={13} color="#fff" strokeWidth={3.4} /></div>
                  <div className="ml-[19px] w-[61px] h-[24px] border border-[#ddd] flex">
                    <div className="w-[37px] flex items-center justify-center border-r border-[#ddd]">100</div>
                    <div className="flex-1 flex items-center justify-center"><ChevronDown size={15} color="#333" strokeWidth={3} /></div>
                  </div>
                  <div className="ml-[20px] w-[20px] h-[20px] bg-[#23659f] flex items-center justify-center"><Plus size={14} color="#fff" strokeWidth={3.2} /></div>
                  <span className="ml-[26px] w-px h-[26px] bg-[#dcdcdc]" />
                  <div className="ml-[30px]"><Caret dir="left" size={10} color="#23659f" /></div>
                  <svg width="22" height="22" viewBox="0 0 22 22" className="ml-[28px] shrink-0">
                    <path d="M11 1.5a9.5 9.5 0 1 1-9.5 9.5" fill="none" stroke="#333" strokeWidth="3" />
                    <path d="M11 5v6h5" fill="none" stroke="#333" strokeWidth="1.6" />
                  </svg>
                  <div className="ml-[28px]"><Caret dir="right" size={10} color="#8fb1cf" /></div>
                  <div className="ml-[25px] pt-[8px]"><Overflow color="#aaa" /></div>
                </div>
              </div>

              {/* right collapse strip */}
              <div className="w-[6px] shrink-0 flex items-center bg-[#c9c9c9] self-stretch">
                <div className="w-[6px] h-[43px] bg-[#666] flex items-center justify-center -mt-[8px]"><Caret dir="right" size={4} color="#fff" /></div>
              </div>

              {/* annotate */}
              <div className="w-[194px] shrink-0 flex flex-col overflow-hidden">
                <div className="h-[31px] shrink-0 bg-[#23659f] rounded-[2px] relative flex items-center justify-center pr-[26px] text-white text-[15px] font-semibold">
                  ANNOTATE
                  <ChevronDown size={17} color="#fff" strokeWidth={3} className="absolute right-[5px]" />
                </div>
                <div className="flex-1 min-h-0 flex border-l border-[#c2cbd2] mt-[2px]">
                  <div className="w-[179px] shrink-0 overflow-hidden text-[15px] text-[#111]">
                    <div className="h-[32px] bg-[#e3e3e3] flex items-center pl-[9px] text-[#555]">
                      <ChevronUp size={17} color="#555" strokeWidth={3} />
                      <span className="ml-[6px] pt-[1px]">HighLight</span>
                    </div>
                    {annotateRows.map((r) => (
                      <div key={r.label} className="h-[31px] border-b border-[#e6e6e6] flex items-center pl-[4px] whitespace-nowrap">
                        {r.icon}
                        <span className="ml-[14px] pt-[2px]">{r.label}</span>
                      </div>
                    ))}
                    <div className="h-[31px] mt-[2px] bg-[#e3e3e3] flex items-center pl-[9px] text-[#555]">
                      <ChevronUp size={17} color="#555" strokeWidth={3} />
                      <span className="ml-[6px] pt-[1px]">Markups</span>
                    </div>
                    <div className="h-[31px] flex items-center pl-[4px] whitespace-nowrap">
                      <svg width="20" height="20" viewBox="0 0 20 20" className={ico}>
                        <rect x="1" y="1" width="18" height="18" fill="#fff" stroke="#e01010" strokeWidth="2.4" />
                        <path d="M6 6h8M10 6v9" stroke="#333" strokeWidth="2" />
                      </svg>
                      <span className="ml-[14px]">Text Box</span>
                    </div>
                  </div>
                  <ScrollY h="h-[232px]" thumbTop="pt-[3px]" thumbH="h-[53px]" w={13} />
                </div>
              </div>
            </div>
          </div>
        </div>

        {/* forms / leads / notes */}
        <div className="mt-[7px] h-[578px] shrink-0 border border-[#c2cbd2] flex flex-col bg-white">
          <PanelHeader
            title={<span className="ml-[5px]">Forms/Leads/Notes</span>}
            children={<div className="w-[113px] h-full pb-[2px] bg-[#d9e3f7] text-[#8a8f96] flex items-center justify-center">Hide Changes</div>}
          />
          <div className="flex-1 min-h-0 flex items-center justify-center text-[15px] text-[#111]">
            Populate Data In Excel
          </div>
          <div className="h-[35px] shrink-0 border-t border-[#c2cbd2] flex pl-[1px]">
            <TabButton label="FORMS" w="w-[156px]" />
            <TabButton label="LEADS" active w="w-[156px]" />
            <TabButton label="NOTES" w="w-[156px]" />
          </div>
        </div>

        {/* status bar */}
        <div className="mt-[6px] -ml-[6px] -mr-[7px] flex-1 border-t border-[#c2cbd2] flex items-center pt-[1px] pl-[1000px] pr-[22px] text-[15px] text-[#222]">
          <span>All changes saved.</span>
          <svg width="18" height="18" viewBox="0 0 18 18" className="shrink-0 ml-auto">
            <circle cx="9" cy="9" r="9" fill="#3fa22f" />
            <path d="M5 9.5l3 3 5-6" fill="none" stroke="#fff" strokeWidth="2.2" />
          </svg>
          <span className="ml-[5px]">Connected to Server</span>
        </div>
      </div>
      <div className="h-[5px] shrink-0" />
    </div>
  );
}
